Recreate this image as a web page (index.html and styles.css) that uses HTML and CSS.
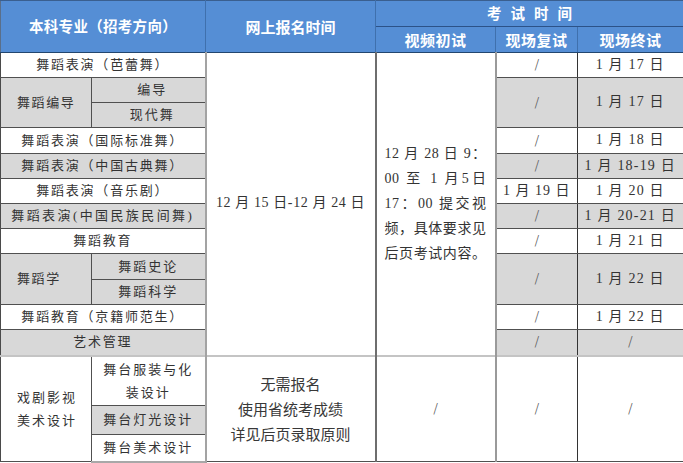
FILE: index.html
```html
<!DOCTYPE html>
<html lang="zh">
<head>
<meta charset="utf-8">
<link rel="stylesheet" href="styles.css">
</head>
<body>
<table class="grid">
  <colgroup>
    <col class="c-sub1"><col class="c-sub2"><col class="c-reg"><col class="c-video"><col class="c-re"><col class="c-final">
  </colgroup>
  <thead>
    <tr class="h1">
      <th colspan="2" rowspan="2" class="th-major">本科专业（招考方向）</th>
      <th rowspan="2" class="th-reg">网上报名时间</th>
      <th colspan="3" class="th-exam">考试时间</th>
    </tr>
    <tr class="h2">
      <th class="th-sub">视频初试</th>
      <th class="th-sub">现场复试</th>
      <th class="th-sub th-last">现场终试</th>
    </tr>
  </thead>
  <tbody>
    <tr class="r25">
      <td colspan="2" class="major">舞蹈表演（芭蕾舞）</td>
      <td rowspan="12" class="reg">12 月 15 日-12 月 24 日</td>
      <td rowspan="12" class="video">
        <div class="jline">12 月 28 日 9：</div>
        <div class="jline">00 至 1 月5日</div>
        <div class="jline">17：00 提交视</div>
        <div class="jline">频，具体要求见</div>
        <div class="jline">后页考试内容。</div>
      </td>
      <td class="re"><span class="sl">/</span></td>
      <td class="final">1 月 17 日</td>
    </tr>
    <tr class="r25">
      <td rowspan="2" class="left gray">舞蹈编导</td>
      <td class="right gray shift">编导</td>
      <td rowspan="2" class="re gray"><span class="sl">/</span></td>
      <td rowspan="2" class="final gray">1 月 17 日</td>
    </tr>
    <tr class="r25">
      <td class="right gray shift">现代舞</td>
    </tr>
    <tr class="r26">
      <td colspan="2" class="major">舞蹈表演（国际标准舞）</td>
      <td class="re"><span class="sl">/</span></td>
      <td class="final">1 月 18 日</td>
    </tr>
    <tr class="r25">
      <td colspan="2" class="major gray">舞蹈表演（中国古典舞）</td>
      <td class="re gray"><span class="sl">/</span></td>
      <td class="final gray">1 月 18-19 日</td>
    </tr>
    <tr class="r25">
      <td colspan="2" class="major">舞蹈表演（音乐剧）</td>
      <td class="re">1 月 19 日</td>
      <td class="final">1 月 20 日</td>
    </tr>
    <tr class="r25">
      <td colspan="2" class="major gray tight">舞蹈表演(中国民族民间舞)</td>
      <td class="re gray"><span class="sl">/</span></td>
      <td class="final gray">1 月 20-21 日</td>
    </tr>
    <tr class="r25">
      <td colspan="2" class="major">舞蹈教育</td>
      <td class="re"><span class="sl">/</span></td>
      <td class="final">1 月 21 日</td>
    </tr>
    <tr class="r26">
      <td rowspan="2" class="left gray">舞蹈学</td>
      <td class="right gray">舞蹈史论</td>
      <td rowspan="2" class="re gray"><span class="sl">/</span></td>
      <td rowspan="2" class="final gray">1 月 22 日</td>
    </tr>
    <tr class="r25">
      <td class="right gray">舞蹈科学</td>
    </tr>
    <tr class="r25">
      <td colspan="2" class="major">舞蹈教育（京籍师范生）</td>
      <td class="re"><span class="sl">/</span></td>
      <td class="final">1 月 22 日</td>
    </tr>
    <tr class="r26">
      <td colspan="2" class="major gray">艺术管理</td>
      <td class="re gray"><span class="sl">/</span></td>
      <td class="final gray"><span class="sl">/</span></td>
    </tr>
    <tr class="r50 sect">
      <td rowspan="3" class="left drama">戏剧影视<br>美术设计</td>
      <td class="right two">舞台服装与化<br>装设计</td>
      <td rowspan="3" class="reg note">无需报名<br>使用省统考成绩<br>详见后页录取原则</td>
      <td rowspan="3" class="video slash"><span class="sl">/</span></td>
      <td rowspan="3" class="re"><span class="sl">/</span></td>
      <td rowspan="3" class="final"><span class="sl">/</span></td>
    </tr>
    <tr class="r29">
      <td class="right gray">舞台灯光设计</td>
    </tr>
    <tr class="r27">
      <td class="right">舞台美术设计</td>
    </tr>
  </tbody>
</table>
</body>
</html>
```

FILE: styles.css
```css
html, body {
  margin: 0;
  padding: 0;
  background: #ffffff;
}

.grid {
  border-collapse: collapse;
  table-layout: fixed;
  width: 683px;
  font-family: "Liberation Serif", "Noto Sans CJK SC", serif;
  font-size: 13px;
  color: #333333;
}

.c-sub1 { width: 91px; }
.c-sub2 { width: 114px; }
.c-reg { width: 170px; }
.c-video { width: 120px; }
.c-re { width: 82px; }
.c-final { width: 106px; }

th {
  background: #558ed5;
  color: #ffffff;
  font-family: "Noto Sans CJK SC", sans-serif;
  font-weight: bold;
  font-size: 14.5px;
  padding: 0;
  line-height: 1;
  border: 1px solid #3f70ad;
  border-top: 1px solid #3a5f8f;
  border-bottom: 1px solid #22466f;
}

.h1 { height: 26px; }
.h2 { height: 26px; }

.th-major { letter-spacing: 0.3px; border-left: 1px solid #5a6f8a; }
.th-reg { font-size: 15px; }
.th-exam {
  letter-spacing: 9px;
  padding-left: 9px;
  border-bottom: 1px solid #2c5288;
}
.th-sub { font-size: 15px; letter-spacing: 0.5px; }
.th-last { border-right: 1px solid #7a8ea8; }

td {
  padding: 0;
  text-align: center;
  vertical-align: middle;
  letter-spacing: 1.6px;
  line-height: 1.2;
  border: 1px solid #505050;
  white-space: nowrap;
}

.r25 { height: 25px; }
.r26 { height: 26px; }
.r50 { height: 50px; }
.r29 { height: 29px; }
.r27 { height: 27px; }

.gray { background: #d8d8d8; }

.major {
  letter-spacing: 1.8px;
  border-left: 1px solid #4a4a4a;
  border-right: 2px solid #a3a3a3;
}
.tight { letter-spacing: 2.4px; }

.left {
  text-align: left;
  padding-left: 16px;
  border-left: 1px solid #4a4a4a;
}
.right {
  border-right: 2px solid #a3a3a3;
}
.shift { padding-left: 8px; }

.reg {
  background: #ffffff;
  border-left: 2px solid #a3a3a3;
  border-right: 2px solid #6e6e6e;
  letter-spacing: 0.6px;
  font-size: 14px;
}

.video {
  background: #ffffff;
  padding: 0 8px;
  border-right: 2px solid #9a9a9a;
  letter-spacing: 0.5px;
  font-size: 14px;
}

.jline {
  line-height: 25px;
  text-align: justify;
  text-align-last: justify;
  white-space: normal;
}

.re {
  font-size: 14px;
  letter-spacing: 1px;
  border-left: 2px solid #9a9a9a;
  border-right: 1px solid #333333;
}
.final {
  font-size: 14px;
  letter-spacing: 1.2px;
  border-left: 1px solid #333333;
  border-right: 2px solid #a0a0a0;
}

.sl {
  font-family: "DejaVu Sans", sans-serif;
  font-size: 14px;
  font-weight: 300;
  color: #555555;
  letter-spacing: 0;
}

.sect td { border-top: 2px solid #c4c4c4; }

.drama { line-height: 23px; letter-spacing: 2px; }
.two { line-height: 23px; letter-spacing: 2px; }
.right { letter-spacing: 2px; }

.note {
  font-family: "Noto Sans CJK SC", sans-serif;
  font-size: 15px;
  letter-spacing: 0;
  line-height: 25px;
  color: #383838;
}

.slash { letter-spacing: 0; }

tbody tr:last-child td { border-bottom: 2px solid #a8a8a8; }
```
